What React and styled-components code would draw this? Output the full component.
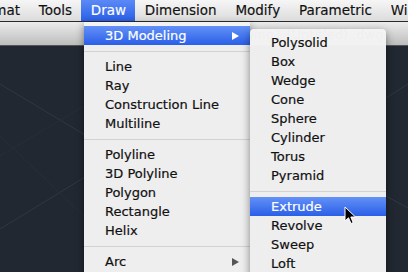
import React from "react";
import styled, { createGlobalStyle } from "styled-components";

const GlobalStyle = createGlobalStyle`
  html, body {
    margin: 0;
    padding: 0;
    background: #212831;
  }
`;

const menuTitles = ["Format", "Tools", "Draw", "Dimension", "Modify", "Parametric", "Window"];

const drawGroups = [
  [{ label: "3D Modeling", sub: true, active: true }],
  [{ label: "Line" }, { label: "Ray" }, { label: "Construction Line" }, { label: "Multiline" }],
  [
    { label: "Polyline" },
    { label: "3D Polyline" },
    { label: "Polygon" },
    { label: "Rectangle" },
    { label: "Helix" },
  ],
  [{ label: "Arc", sub: true }],
];

const modelGroups = [
  [
    { label: "Polysolid" },
    { label: "Box" },
    { label: "Wedge" },
    { label: "Cone" },
    { label: "Sphere" },
    { label: "Cylinder" },
    { label: "Torus" },
    { label: "Pyramid" },
  ],
  [{ label: "Extrude", active: true }, { label: "Revolve" }, { label: "Sweep" }, { label: "Loft" }],
];

const App = () => {
  return (
    <>
      <GlobalStyle />
      <Screen>
        <MenuBar>
          {menuTitles.map((t, i) => (
            <MenuTitle key={t} active={t === "Draw"} first={i === 0}>
              {t}
            </MenuTitle>
          ))}
        </MenuBar>
        <TitleBar>
          <TitleText>Drawing1 (Untitled) .dwg</TitleText>
        </TitleBar>
        <Canvas>
          <svg width="408" height="230" viewBox="0 0 408 230">
            <g stroke="#3a4552" strokeWidth="1" opacity="0.55">
              <line x1="0" y1="38" x2="90" y2="92" />
              <line x1="0" y1="183" x2="90" y2="128" />
              <line x1="386" y1="52" x2="408" y2="38" />
              <line x1="386" y1="150" x2="408" y2="162" />
            </g>
            <g stroke="#2a333e" strokeWidth="1" opacity="0.6">
              <line x1="0" y1="110" x2="84" y2="60" />
              <line x1="0" y1="90" x2="84" y2="170" />
            </g>
          </svg>
        </Canvas>

        <DrawMenu>
          {drawGroups.map((group, gi) => (
            <React.Fragment key={gi}>
              {gi > 0 && <Separator />}
              {group.map((item) => (
                <MenuItem key={item.label} active={item.active}>
                  <span>{item.label}</span>
                  {item.sub && <Arrow active={item.active} />}
                </MenuItem>
              ))}
            </React.Fragment>
          ))}
        </DrawMenu>

        <SubMenu>
          {modelGroups.map((group, gi) => (
            <React.Fragment key={gi}>
              {gi > 0 && <Separator />}
              {group.map((item) => (
                <MenuItem key={item.label} active={item.active}>
                  <span>{item.label}</span>
                </MenuItem>
              ))}
            </React.Fragment>
          ))}
        </SubMenu>

        <Cursor width="14" height="20" viewBox="0 0 14 20">
          <path
            d="M1 1 L1 15 L4.5 11.8 L7 17.5 L9.2 16.6 L6.8 11 L11.5 11 Z"
            fill="#000"
            stroke="#fff"
            strokeWidth="1"
            strokeLinejoin="round"
          />
        </Cursor>
      </Screen>
    </>
  );
};

export default App;

const font = `"Lucida Grande", "DejaVu Sans", sans-serif`;

const Screen = styled.div`
  position: relative;
  width: 408px;
  height: 272px;
  overflow: hidden;
  display: flex;
  flex-direction: column;
  background: #212831;
  font-family: ${font};
`;

const MenuBar = styled.div`
  display: flex;
  height: 21px;
  flex-shrink: 0;
  background: linear-gradient(#f6f6f6, #dcdcdc);
  border-bottom: 1px solid #2a2a2a;
  white-space: nowrap;
`;

const MenuTitle = styled.div`
  padding: 0 9.4px;
  margin-left: ${(p) => (p.first ? "-37px" : "0")};
  line-height: 21px;
  font-size: 13.5px;
  -webkit-text-stroke: 0.15px currentColor;
  color: ${(p) => (p.active ? "#fff" : "#111")};
  background: ${(p) => (p.active ? "linear-gradient(#5b8af6, #2a5fe8)" : "none")};
`;

const TitleBar = styled.div`
  height: 23px;
  flex-shrink: 0;
  display: flex;
  align-items: center;
  padding-left: 220px;
  background: linear-gradient(#ececec, #bdbdbd);
  border-bottom: 1px solid #555;
  white-space: nowrap;
`;

const TitleText = styled.span`
  font-size: 13px;
  color: #2a2a2a;
  padding-top: 2px;
`;

const Canvas = styled.div`
  flex: 1;
  background: #212831;
  svg {
    display: block;
  }
`;

const Menu = styled.div`
  position: absolute;
  display: flex;
  flex-direction: column;
  background: rgba(243, 243, 243, 0.98);
  box-shadow: 0 3px 8px rgba(0, 0, 0, 0.45);
`;

const DrawMenu = styled(Menu)`
  left: 84px;
  top: 22px;
  width: 166px;
  padding: 4px 0 6px;
`;

const SubMenu = styled(Menu)`
  left: 250px;
  top: 29px;
  width: 136px;
  padding: 4px 0 6px;
  border-radius: 4px 4px 0 0;
`;

const MenuItem = styled.div`
  display: flex;
  align-items: center;
  justify-content: space-between;
  height: 19px;
  padding: 0 11px 0 21px;
  font-size: 13px;
  -webkit-text-stroke: 0.2px currentColor;
  color: ${(p) => (p.active ? "#fff" : "#111")};
  background: ${(p) => (p.active ? "linear-gradient(#6391f7, #2a5fe8)" : "transparent")};
  white-space: nowrap;
`;

const Arrow = styled.i`
  width: 0;
  height: 0;
  border-top: 4.5px solid transparent;
  border-bottom: 4.5px solid transparent;
  border-left: 7px solid ${(p) => (p.active ? "#fff" : "#555")};
`;

const Separator = styled.div`
  height: 12px;
  display: flex;
  align-items: center;
  &::after {
    content: "";
    flex: 1;
    height: 1px;
    background: #d2d2d2;
  }
`;

const Cursor = styled.svg`
  position: absolute;
  left: 344px;
  top: 206px;
`;
